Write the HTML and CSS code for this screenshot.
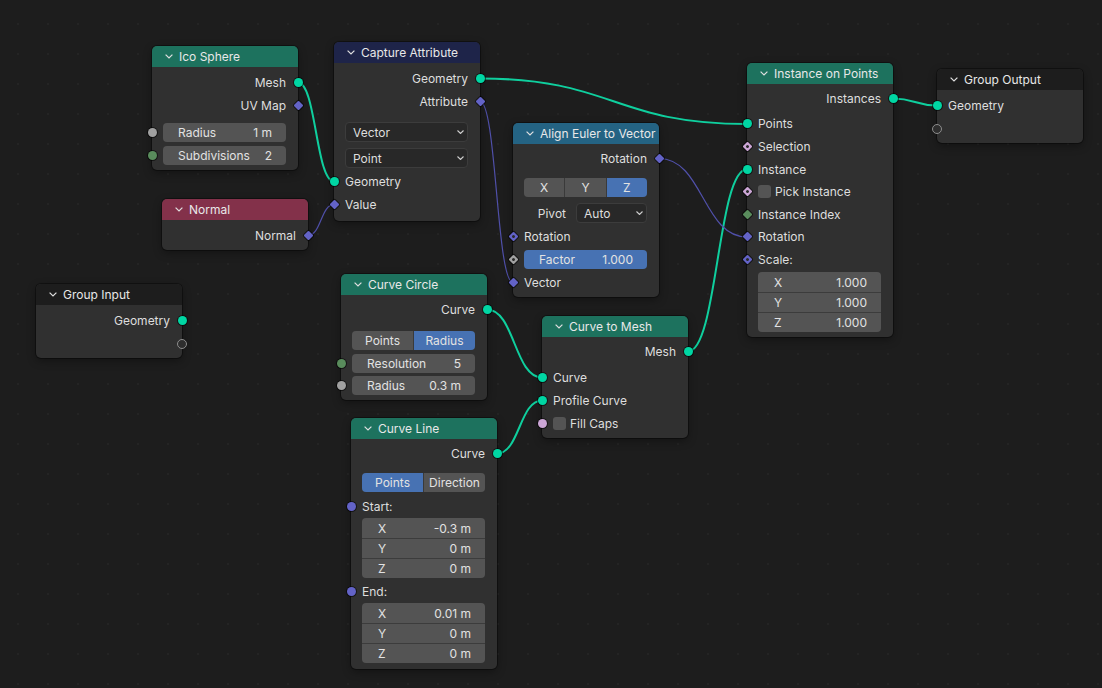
FILE: index.html
```html
<!DOCTYPE html>
<html>
<head>
<meta charset="utf-8">
<link rel="stylesheet" href="styles.css">
</head>
<body>
<div class="canvas">
  <svg class="links" width="1102" height="688" viewBox="0 0 1102 688">
    <g class="lk-geo">
      <path d="M298 82.5 C316 82.5, 316 181.5, 334 181.5"/>
      <path d="M480 78.5 C613.5 78.5, 613.5 124, 747 124"/>
      <path d="M487 309.5 C514.5 309.5, 514.5 377.5, 542 377.5"/>
      <path d="M497 453.5 C519.5 453.5, 519.5 400.5, 542 400.5"/>
      <path d="M688 351.5 C717.5 351.5, 717.5 169.2, 747 169.2"/>
      <path d="M893 98.5 C915 98.5, 915 105.5, 937 105.5"/>
    </g>
    <g class="lk-vec">
      <path d="M308 235.5 C321 235.5, 321 204.5, 334 204.5"/>
      <path d="M480 101.5 C496.5 101.5, 496.5 282.5, 513 282.5"/>
      <path d="M659 158.5 C703 158.5, 703 237, 747 237"/>
    </g>
  </svg>

  <!-- Ico Sphere -->
  <div class="node n-ico">
    <div class="hdr h-geo"><svg class="chev" viewBox="0 0 8 5"><polyline points="0.6,0.6 4,4 7.4,0.6"/></svg><span>Ico Sphere</span></div>
    <div class="body">
      <div class="row out"><span>Mesh</span><i class="s geo"></i></div>
      <div class="row out"><span>UV Map</span><i class="s d vec"></i></div>
      <div class="field mt6"><i class="s flt"></i><span>Radius</span><span>1 m</span></div>
      <div class="field mt35"><i class="s int"></i><span>Subdivisions</span><span>2</span></div>
    </div>
  </div>

  <!-- Capture Attribute -->
  <div class="node n-cap">
    <div class="hdr h-cap"><svg class="chev" viewBox="0 0 8 5"><polyline points="0.6,0.6 4,4 7.4,0.6"/></svg><span>Capture Attribute</span></div>
    <div class="body">
      <div class="row out"><span>Geometry</span><i class="s geo"></i></div>
      <div class="row out"><span>Attribute</span><i class="s d vec"></i></div>
      <div class="dd mt9"><span>Vector</span><svg class="ddarr" viewBox="0 0 7 4"><polyline points="0.5,0.5 3.5,3.5 6.5,0.5"/></svg></div>
      <div class="dd mt6"><span>Point</span><svg class="ddarr" viewBox="0 0 7 4"><polyline points="0.5,0.5 3.5,3.5 6.5,0.5"/></svg></div>
      <div class="row in mt2"><i class="s geo"></i><span>Geometry</span></div>
      <div class="row in"><i class="s d vec"></i><span>Value</span></div>
    </div>
  </div>

  <!-- Normal -->
  <div class="node n-nrm">
    <div class="hdr h-nrm"><svg class="chev" viewBox="0 0 8 5"><polyline points="0.6,0.6 4,4 7.4,0.6"/></svg><span>Normal</span></div>
    <div class="body pb3">
      <div class="row out"><span>Normal</span><i class="s d vec"></i></div>
    </div>
  </div>

  <!-- Group Input -->
  <div class="node n-gin">
    <div class="hdr h-grp"><svg class="chev" viewBox="0 0 8 5"><polyline points="0.6,0.6 4,4 7.4,0.6"/></svg><span>Group Input</span></div>
    <div class="body pb3">
      <div class="row out"><span>Geometry</span><i class="s geo"></i></div>
      <div class="row out"><i class="s empty"></i></div>
    </div>
  </div>

  <!-- Align Euler to Vector -->
  <div class="node n-ali">
    <div class="hdr h-vec"><svg class="chev" viewBox="0 0 8 5"><polyline points="0.6,0.6 4,4 7.4,0.6"/></svg><span>Align Euler to Vector</span></div>
    <div class="body pt3 pb3">
      <div class="row out"><span>Rotation</span><i class="s d vec"></i></div>
      <div class="seg mt8"><span>X</span><span>Y</span><span class="on">Z</span></div>
      <div class="pivot mt6"><span class="plabel">Pivot</span><div class="dd w70"><span>Auto</span><svg class="ddarr" viewBox="0 0 7 4"><polyline points="0.5,0.5 3.5,3.5 6.5,0.5"/></svg></div></div>
      <div class="row in mt2"><i class="s d vec dot"></i><span>Rotation</span></div>
      <div class="field blue mt2"><i class="s d flt dot"></i><span>Factor</span><span>1.000</span></div>
      <div class="row in mt2"><i class="s d vec"></i><span>Vector</span></div>
    </div>
  </div>

  <!-- Instance on Points -->
  <div class="node n-inst">
    <div class="hdr h-geo"><svg class="chev" viewBox="0 0 8 5"><polyline points="0.6,0.6 4,4 7.4,0.6"/></svg><span>Instance on Points</span></div>
    <div class="body pt3">
      <div class="row out"><span>Instances</span><i class="s geo"></i></div>
      <div class="row in r226 mt27"><i class="s geo"></i><span>Points</span></div>
      <div class="row in r226"><i class="s d bool dot"></i><span>Selection</span></div>
      <div class="row in r226"><i class="s geo"></i><span>Instance</span></div>
      <div class="row in r226"><i class="s d bool dot"></i><span class="cb"></span><span>Pick Instance</span></div>
      <div class="row in r226"><i class="s d int"></i><span>Instance Index</span></div>
      <div class="row in r226"><i class="s d vec"></i><span>Rotation</span></div>
      <div class="row in r226"><i class="s d vec dot"></i><span>Scale:</span></div>
      <div class="stack mt14">
        <div class="cell"><span>X</span><span>1.000</span></div>
        <div class="cell"><span>Y</span><span>1.000</span></div>
        <div class="cell"><span>Z</span><span>1.000</span></div>
      </div>
    </div>
  </div>

  <!-- Group Output -->
  <div class="node n-gout">
    <div class="hdr h-grp"><svg class="chev" viewBox="0 0 8 5"><polyline points="0.6,0.6 4,4 7.4,0.6"/></svg><span>Group Output</span></div>
    <div class="body pb3">
      <div class="row in"><i class="s geo"></i><span>Geometry</span></div>
      <div class="row in"><i class="s empty"></i></div>
    </div>
  </div>

  <!-- Curve Circle -->
  <div class="node n-cc">
    <div class="hdr h-geo"><svg class="chev" viewBox="0 0 8 5"><polyline points="0.6,0.6 4,4 7.4,0.6"/></svg><span>Curve Circle</span></div>
    <div class="body pt3">
      <div class="row out"><span>Curve</span><i class="s geo"></i></div>
      <div class="seg mt10"><span>Points</span><span class="on">Radius</span></div>
      <div class="field mt35"><i class="s int"></i><span>Resolution</span><span>5</span></div>
      <div class="field mt35"><i class="s flt"></i><span>Radius</span><span>0.3 m</span></div>
    </div>
  </div>

  <!-- Curve to Mesh -->
  <div class="node n-c2m">
    <div class="hdr h-geo"><svg class="chev" viewBox="0 0 8 5"><polyline points="0.6,0.6 4,4 7.4,0.6"/></svg><span>Curve to Mesh</span></div>
    <div class="body pt3 pb3">
      <div class="row out"><span>Mesh</span><i class="s geo"></i></div>
      <div class="row in mt3"><i class="s geo"></i><span>Curve</span></div>
      <div class="row in"><i class="s geo"></i><span>Profile Curve</span></div>
      <div class="row in"><i class="s bool"></i><span class="cb"></span><span>Fill Caps</span></div>
    </div>
  </div>

  <!-- Curve Line -->
  <div class="node n-cl">
    <div class="hdr h-geo"><svg class="chev" viewBox="0 0 8 5"><polyline points="0.6,0.6 4,4 7.4,0.6"/></svg><span>Curve Line</span></div>
    <div class="body pt3 pb6">
      <div class="row out"><span>Curve</span><i class="s geo"></i></div>
      <div class="seg mt8"><span class="on">Points</span><span>Direction</span></div>
      <div class="row in mt3"><i class="s vec"></i><span>Start:</span></div>
      <div class="stack">
        <div class="cell"><span>X</span><span>-0.3 m</span></div>
        <div class="cell"><span>Y</span><span>0 m</span></div>
        <div class="cell"><span>Z</span><span>0 m</span></div>
      </div>
      <div class="row in mt2"><i class="s vec"></i><span>End:</span></div>
      <div class="stack">
        <div class="cell"><span>X</span><span>0.01 m</span></div>
        <div class="cell"><span>Y</span><span>0 m</span></div>
        <div class="cell"><span>Z</span><span>0 m</span></div>
      </div>
    </div>
  </div>
</div>
</body>
</html>
```

FILE: styles.css
```css
* { box-sizing: border-box; margin: 0; padding: 0; }
html, body { width: 1102px; height: 688px; overflow: hidden; background: #1d1d1d; }
body {
  font-family: Inter, "Noto Sans", "Liberation Sans", sans-serif;
  font-size: 12px;
  color: #dedede;
}
.canvas {
  position: relative;
  width: 1102px;
  height: 688px;
  background-color: #1d1d1d;
  background-image: radial-gradient(circle, #242424 0.8px, transparent 1.2px);
  background-size: 30px 30px;
  background-position: 3px 9px;
}
.links { position: absolute; left: 0; top: 0; }
.links path { fill: none; }
.lk-geo path { stroke: #0fcf9e; stroke-width: 2; }
.lk-vec path { stroke: #5050aa; stroke-width: 1.2; }

.node {
  position: absolute;
  width: 146px;
  background: #303030;
  border-radius: 5px;
  box-shadow: 0 0 0 1px rgba(0,0,0,0.35), 0 3px 8px rgba(0,0,0,0.35);
}
.n-ico  { left: 152px; top: 46px; }
.n-cap  { left: 334px; top: 42px; }
.n-nrm  { left: 162px; top: 199px; }
.n-gin  { left: 36px;  top: 284px; }
.n-ali  { left: 513px; top: 123px; }
.n-inst { left: 747px; top: 63px; }
.n-gout { left: 937px; top: 69px; }
.n-cc   { left: 341px; top: 274px; }
.n-c2m  { left: 542px; top: 316px; }
.n-cl   { left: 351px; top: 418px; }

.hdr {
  height: 21px;
  border-radius: 5px 5px 0 0;
  display: flex;
  align-items: center;
  gap: 6px;
  padding-left: 13px;
  color: #e8e8e8;
}
.h-geo { background: #1d725e; }
.h-cap { background: #1e2449; }
.h-nrm { background: #83314a; }
.h-vec { background: #246383; }
.h-grp { background: #1d1d1d; }
.chev { width: 8px; height: 5px; flex: none; }
.chev polyline { fill: none; stroke: #e0e0e0; stroke-width: 1.2; }

.body { padding: 4px 12px 5px 11px; }
.pt3 { padding-top: 3px; }
.pb3 { padding-bottom: 3px; }
.pb6 { padding-bottom: 6px; }
.mt2 { margin-top: 2px; }
.mt3 { margin-top: 3px; }
.mt35 { margin-top: 3.5px; }
.mt6 { margin-top: 6px; }
.mt8 { margin-top: 8px; }
.mt9 { margin-top: 9px; }
.mt10 { margin-top: 10px; }
.mt14 { margin-top: 1.4px; }
.mt27 { margin-top: 2.7px; }

.row {
  height: 23px;
  display: flex;
  align-items: center;
  position: relative;
  white-space: nowrap;
}
.row.r226 { height: 22.6px; }
.row.out { justify-content: flex-end; }

.s {
  position: absolute;
  top: 50%;
  width: 9px;
  height: 9px;
  margin-top: -4.5px;
  border-radius: 50%;
  box-shadow: 0 0 0 1px rgba(0,0,0,0.55);
}
.out > .s { right: -16.5px; }
.in > .s, .field > .s { left: -15.5px; }
.s.d {
  width: 7px;
  height: 7px;
  margin-top: -3.5px;
  border-radius: 1px;
  transform: rotate(45deg);
}
.out > .s.d { right: -15.5px; }
.in > .s.d, .field > .s.d { left: -14.5px; }
.s.dot::after {
  content: "";
  position: absolute;
  left: 2px;
  top: 2px;
  width: 3px;
  height: 3px;
  border-radius: 50%;
  background: #2a2a2a;
}
.geo { background: #00d6a3; }
.vec { background: #6363c7; }
.flt { background: #a1a1a1; }
.int { background: #598c5c; }
.bool { background: #cca6d6; }
.s.empty {
  width: 10px;
  height: 10px;
  margin-top: -5px;
  background: #2e2e2e;
  border: 1.5px solid #8d8d8d;
  box-shadow: none;
}
.out > .s.empty { right: -17px; }
.in > .s.empty { left: -16px; }

.field {
  position: relative;
  height: 19px;
  background: #545454;
  border-radius: 4px;
  display: flex;
  align-items: center;
  justify-content: space-between;
  padding: 0 14px 0 15px;
  color: #e2e2e2;
  white-space: nowrap;
}
.field.blue { background: #4772b3; }

.dd {
  height: 20px;
  background: #282828;
  border: 1px solid #3c3c3c;
  border-radius: 4px;
  display: flex;
  align-items: center;
  justify-content: space-between;
  padding: 0 3px 0 7px;
  color: #dedede;
}
.ddarr { width: 7px; height: 4px; }
.ddarr polyline { fill: none; stroke: #cfcfcf; stroke-width: 1.1; }
.w70 { width: 71px; flex: none; }

.pivot { display: flex; align-items: center; height: 20px; }
.plabel { flex: 1; text-align: right; padding-right: 10px; }

.seg {
  display: flex;
  height: 19px;
  border-radius: 4px;
  overflow: hidden;
  gap: 1px;
  background: #3a3a3a;
}
.seg > span {
  flex: 1;
  background: #545454;
  display: flex;
  align-items: center;
  justify-content: center;
  color: #e2e2e2;
}
.seg > span.on { background: #4772b3; }

.stack {
  border-radius: 4px;
  overflow: hidden;
  background: #545454;
}
.cell {
  height: 20px;
  display: flex;
  align-items: center;
  justify-content: space-between;
  padding: 0 14px 0 16px;
  color: #e2e2e2;
}
.cell + .cell { border-top: 1px solid #3c3c3c; }

.cb {
  width: 13px;
  height: 13px;
  background: #545454;
  border-radius: 3px;
  margin-right: 4px;
  flex: none;
}
```
